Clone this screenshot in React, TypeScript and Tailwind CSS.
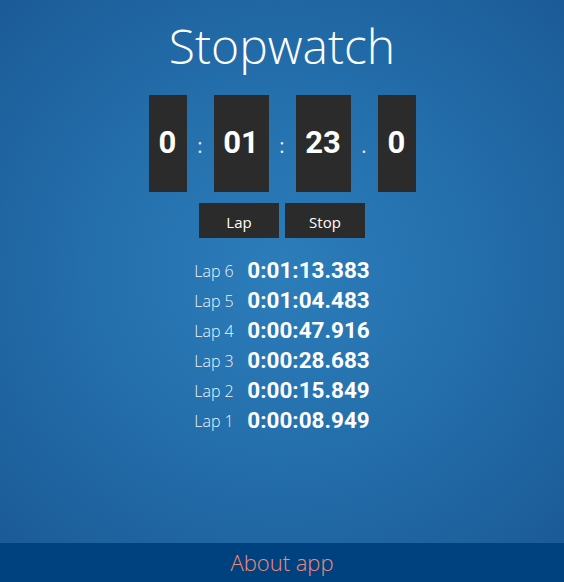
import React from "react";

const laps = [
  { n: 6, t: "0:01:13.383" },
  { n: 5, t: "0:01:04.483" },
  { n: 4, t: "0:00:47.916" },
  { n: 3, t: "0:00:28.683" },
  { n: 2, t: "0:00:15.849" },
  { n: 1, t: "0:00:08.949" },
];

const Digit: React.FC<{ value: string; wide?: boolean }> = ({ value, wide }) => (
  <div
    className={`${wide ? "w-[55px]" : "w-[38px]"} h-[97px] bg-[#2b2b2b] flex items-center justify-center text-white text-[31px] font-bold font-['Roboto',sans-serif]`}
  >
    {value}
  </div>
);

const Sep: React.FC<{ ch: string }> = ({ ch }) => (
  <div className="w-[27px] flex items-center justify-center text-white/90 text-[20px] font-['Open_Sans',sans-serif] pt-[4px]">
    {ch}
  </div>
);

export default function App() {
  return (
    <div className="w-[564px] h-[582px] flex flex-col font-['Open_Sans',sans-serif]">
      <div className="flex-1 flex flex-col items-center bg-[radial-gradient(ellipse_at_center,#2c7dba_0%,#2470ad_45%,#1b5b97_100%)]">
        <h1 className="mt-[14px] text-[48px] leading-[64px] font-light text-white">
          Stopwatch
        </h1>
        <div className="mt-[17px] flex">
          <Digit value="0" />
          <Sep ch=":" />
          <Digit value="01" wide />
          <Sep ch=":" />
          <Digit value="23" wide />
          <Sep ch="." />
          <Digit value="0" />
        </div>
        <div className="mt-[11px] flex gap-[6px]">
          <button className="w-[80px] h-[35px] pt-[3px] bg-[#2b2b2b] text-white text-[15px]">
            Lap
          </button>
          <button className="w-[80px] h-[35px] pt-[3px] bg-[#2b2b2b] text-white text-[15px]">
            Stop
          </button>
        </div>
        <div className="mt-[18px] flex flex-col">
          {laps.map((l) => (
            <div key={l.n} className="flex items-center h-[30px]">
              <span className="w-[53px] text-[16px] font-light text-white/95">
                Lap {l.n}
              </span>
              <span className="text-[22.5px] font-bold text-white font-['Roboto',sans-serif]">
                {l.t}
              </span>
            </div>
          ))}
        </div>
      </div>
      <div className="h-[39px] bg-[#00427f] flex items-center justify-center">
        <span className="text-[22px] font-light text-[#f08a7a]">About app</span>
      </div>
    </div>
  );
}
